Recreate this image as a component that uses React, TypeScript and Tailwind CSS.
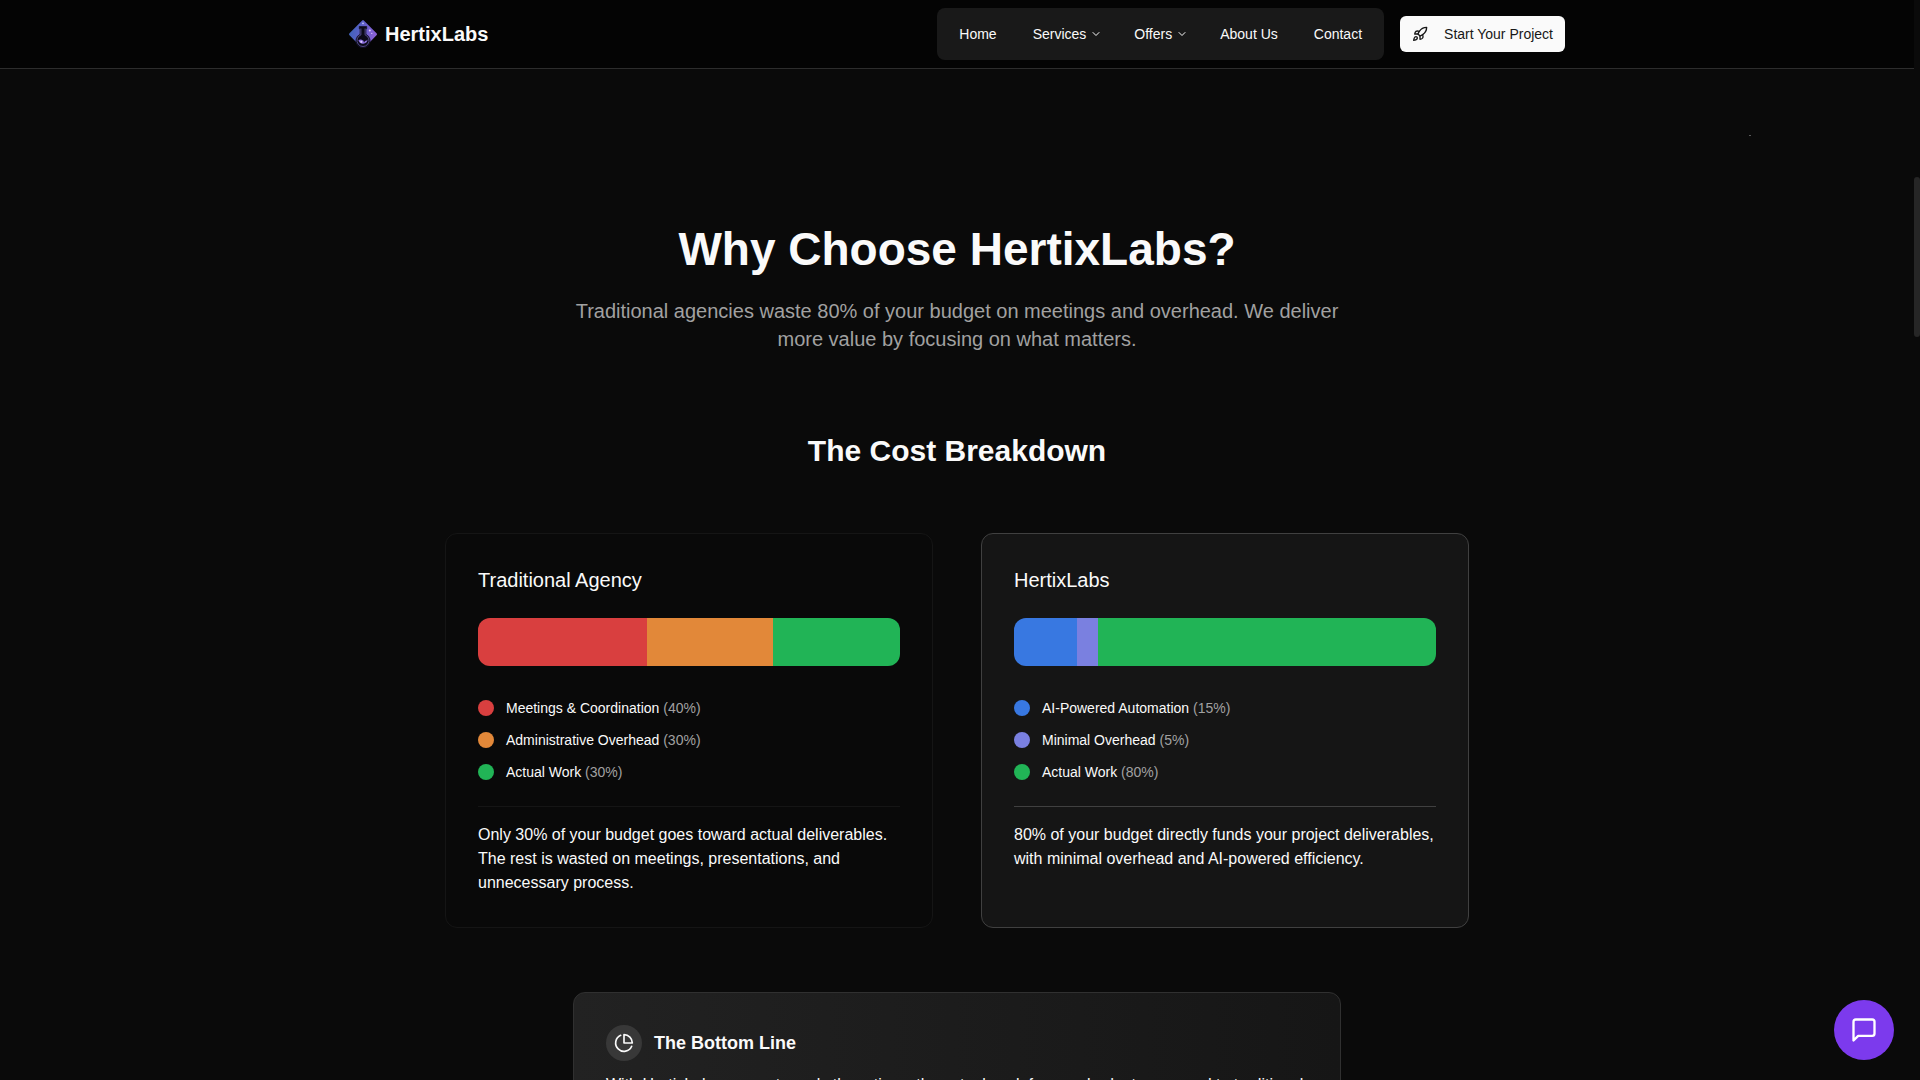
import React from "react";
import { ChevronDown, Rocket } from "lucide-react";
import { clsx } from "clsx";

const NAV_ITEMS = [
  { label: "Home", hasMenu: false },
  { label: "Services", hasMenu: true },
  { label: "Offers", hasMenu: true },
  { label: "About Us", hasMenu: false },
  { label: "Contact", hasMenu: false },
];

const BREAKDOWNS = [
  {
    title: "Traditional Agency",
    highlighted: false,
    segments: [
      { label: "Meetings & Coordination", share: 40, color: "bg-[#d93f3f]" },
      { label: "Administrative Overhead", share: 30, color: "bg-[#e28839]" },
      { label: "Actual Work", share: 30, color: "bg-[#21b456]" },
    ],
    summary:
      "Only 30% of your budget goes toward actual deliverables. The rest is wasted on meetings, presentations, and unnecessary process.",
  },
  {
    title: "HertixLabs",
    highlighted: true,
    segments: [
      { label: "AI-Powered Automation", share: 15, color: "bg-[#3878e1]" },
      { label: "Minimal Overhead", share: 5, color: "bg-[#7a80e0]" },
      { label: "Actual Work", share: 80, color: "bg-[#21b456]" },
    ],
    summary:
      "80% of your budget directly funds your project deliverables, with minimal overhead and AI-powered efficiency.",
  },
];

function Logo() {
  return (
    <svg width="28" height="28" viewBox="0 0 28 28" aria-hidden="true">
      <defs>
        <linearGradient id="logo-fill" x1="0" y1="0.4" x2="1" y2="0.6">
          <stop offset="0" stopColor="#3d63b8" />
          <stop offset="0.5" stopColor="#645fcb" />
          <stop offset="1" stopColor="#8f62d8" />
        </linearGradient>
      </defs>
      {/* Diamond */}
      <path
        d="M13.2.4a1.200 1.200 0 0 1 1.600 0l12.700 12.800a1.400 1.400 0 0 1 0 2L20 23l-6 2-6-2L.5 15.200a1.400 1.400 0 0 1 0-2z"
        fill="url(#logo-fill)"
      />
      {/* Flask */}
      <path
        d="M10.300 6.500h7.400v2.200h-.8v5.600a7.100 7.100 0 1 1-5.800 0V8.700h-.8z"
        fill="#0b0a18"
        stroke="#15132b"
        strokeWidth="0.8"
      />
      <path
        d="M11.900 8.500v6.400a6 6 0 1 0 4.200 0V8.500"
        fill="none"
        stroke="#6f64b4"
        strokeWidth="0.7"
      />
      <path
        d="M9.400 20.200q2.300-1.500 4.600.2t4.600-.9a4.700 4.700 0 0 1-9.200.7z"
        fill="#8b6fe0"
      />
      <circle cx="12.300" cy="21.800" r="1.100" fill="#ded2ff" />
      <circle cx="15.200" cy="21.600" r="0.7" fill="#0b0a18" />
      <circle cx="14" cy="3.300" r="0.9" fill="#bfc6f8" />
      <circle cx="20.800" cy="10.600" r="1" fill="#e3cdfb" />
      <circle cx="22.800" cy="13.400" r="0.6" fill="#e3cdfb" />
    </svg>
  );
}

function PieIcon() {
  return (
    <svg
      className="size-5"
      viewBox="0 0 24 24"
      fill="none"
      stroke="currentColor"
      strokeWidth="2"
      strokeLinecap="round"
      strokeLinejoin="round"
      aria-hidden="true"
    >
      <path d="M21.210 15.890A10 10 0 1 1 8 2.830" />
      <path d="M22 12A10 10 0 0 0 12 2v10z" />
    </svg>
  );
}

function Header() {
  return (
    <header className="border-b border-[#2d2d2d] bg-[#040404]">
      <div className="mx-auto flex h-17 max-w-7xl items-center justify-between px-8">
        <a href="#home" className="flex items-center gap-2 text-xl font-bold">
          <Logo />
          HertixLabs
        </a>
        <div className="flex items-center gap-4">
          <nav className="rounded-lg bg-[#191919] p-1.5">
            <ul className="flex items-center gap-1">
              {NAV_ITEMS.map((item) => (
                <li key={item.label}>
                  {item.hasMenu ? (
                    <button
                      type="button"
                      className="flex h-10 items-center gap-1 rounded-md pr-3 pl-4 text-sm font-medium"
                    >
                      {item.label}
                      <ChevronDown size={12} />
                    </button>
                  ) : (
                    <a
                      href="#"
                      className="flex h-10 items-center rounded-md px-4 text-sm font-medium"
                    >
                      {item.label}
                    </a>
                  )}
                </li>
              ))}
            </ul>
          </nav>
          <button
            type="button"
            className="flex h-9 items-center gap-4 rounded-md bg-[#fafafa] px-3 text-sm text-[#171717]"
          >
            <Rocket size={16} />
            Start Your Project
          </button>
        </div>
      </div>
    </header>
  );
}

function BreakdownCard({ data }: { data: (typeof BREAKDOWNS)[number] }) {
  return (
    <div
      className={clsx(
        "rounded-xl border p-8",
        data.highlighted
          ? "border-[#404040] bg-[#151515]"
          : "border-[#151515] bg-[#090909]",
      )}
    >
      <h3 className="text-xl">{data.title}</h3>

      <div className="mt-6 flex h-12 overflow-hidden rounded-xl">
        {data.segments.map((segment) => (
          <div
            key={segment.label}
            className={segment.color}
            style={{ width: `${segment.share}%` }}
          />
        ))}
      </div>

      <ul className="mt-8 space-y-3">
        {data.segments.map((segment) => (
          <li key={segment.label} className="flex items-center gap-3 text-sm">
            <span className={clsx("size-4 rounded-full", segment.color)} />
            <span className="font-medium">
              {segment.label}{" "}
              <span className="font-normal text-[#a1a1a1]">
                ({segment.share}%)
              </span>
            </span>
          </li>
        ))}
      </ul>

      <p
        className={clsx(
          "mt-6 border-t pt-4",
          data.highlighted ? "border-[#404040]" : "border-[#151515]",
        )}
      >
        {data.summary}
      </p>
    </div>
  );
}

export default function App() {
  return (
    <div className="relative h-screen overflow-hidden bg-[#0a0a0a] pr-1.5 font-['Liberation_Sans',Arial,sans-serif] text-[#fafafa]">
      <Header />

      <main className="px-4 pt-39">
        <div className="mx-auto max-w-3xl text-center">
          <h1 className="text-[46px] leading-12 font-bold">
            Why Choose HertixLabs?
          </h1>
          <p className="mt-6 text-xl text-[#a1a1a1]">
            Traditional agencies waste 80% of your budget on meetings and
            overhead. We deliver more value by focusing on what matters.
          </p>
        </div>

        <h2 className="mt-20 text-center text-3xl font-bold">
          The Cost Breakdown
        </h2>

        <div className="mx-auto mt-16 grid max-w-5xl grid-cols-1 gap-12 md:grid-cols-2">
          {BREAKDOWNS.map((data) => (
            <BreakdownCard key={data.title} data={data} />
          ))}
        </div>

        {/* Bottom line */}
        <div className="mx-auto mt-16 max-w-3xl rounded-xl border border-[#303030] bg-linear-to-r from-[#222222] to-[#161616] p-8">
          <div className="flex items-center gap-3">
            <span className="flex size-9 items-center justify-center rounded-full bg-[#383838]">
              <PieIcon />
            </span>
            <h3 className="text-lg font-bold">The Bottom Line</h3>
          </div>
          <p className="mt-3">
            With HertixLabs, you get nearly three times the actual work for your
            budget compared to traditional agencies.
          </p>
        </div>
      </main>

      {/* Background particle */}
      <span className="absolute top-[135px] right-[169px] h-px w-0.5 bg-[#5a5a5a]" />

      {/* Scroll thumb */}
      <div className="absolute top-[177px] right-0 h-40 w-1.5 rounded-full bg-[#262626]" />

      <button
        type="button"
        aria-label="Open chat"
        className="absolute right-[26px] bottom-5 flex size-15 items-center justify-center rounded-full bg-[#7c3aed] text-white"
      >
        <svg
          className="size-7"
          viewBox="0 0 24 24"
          fill="none"
          stroke="currentColor"
          strokeWidth="2"
          strokeLinecap="round"
          strokeLinejoin="round"
          aria-hidden="true"
        >
          <path d="M21 15a2 2 0 0 1-2 2H7l-4 4V5a2 2 0 0 1 2-2h14a2 2 0 0 1 2 2z" />
        </svg>
      </button>
    </div>
  );
}
